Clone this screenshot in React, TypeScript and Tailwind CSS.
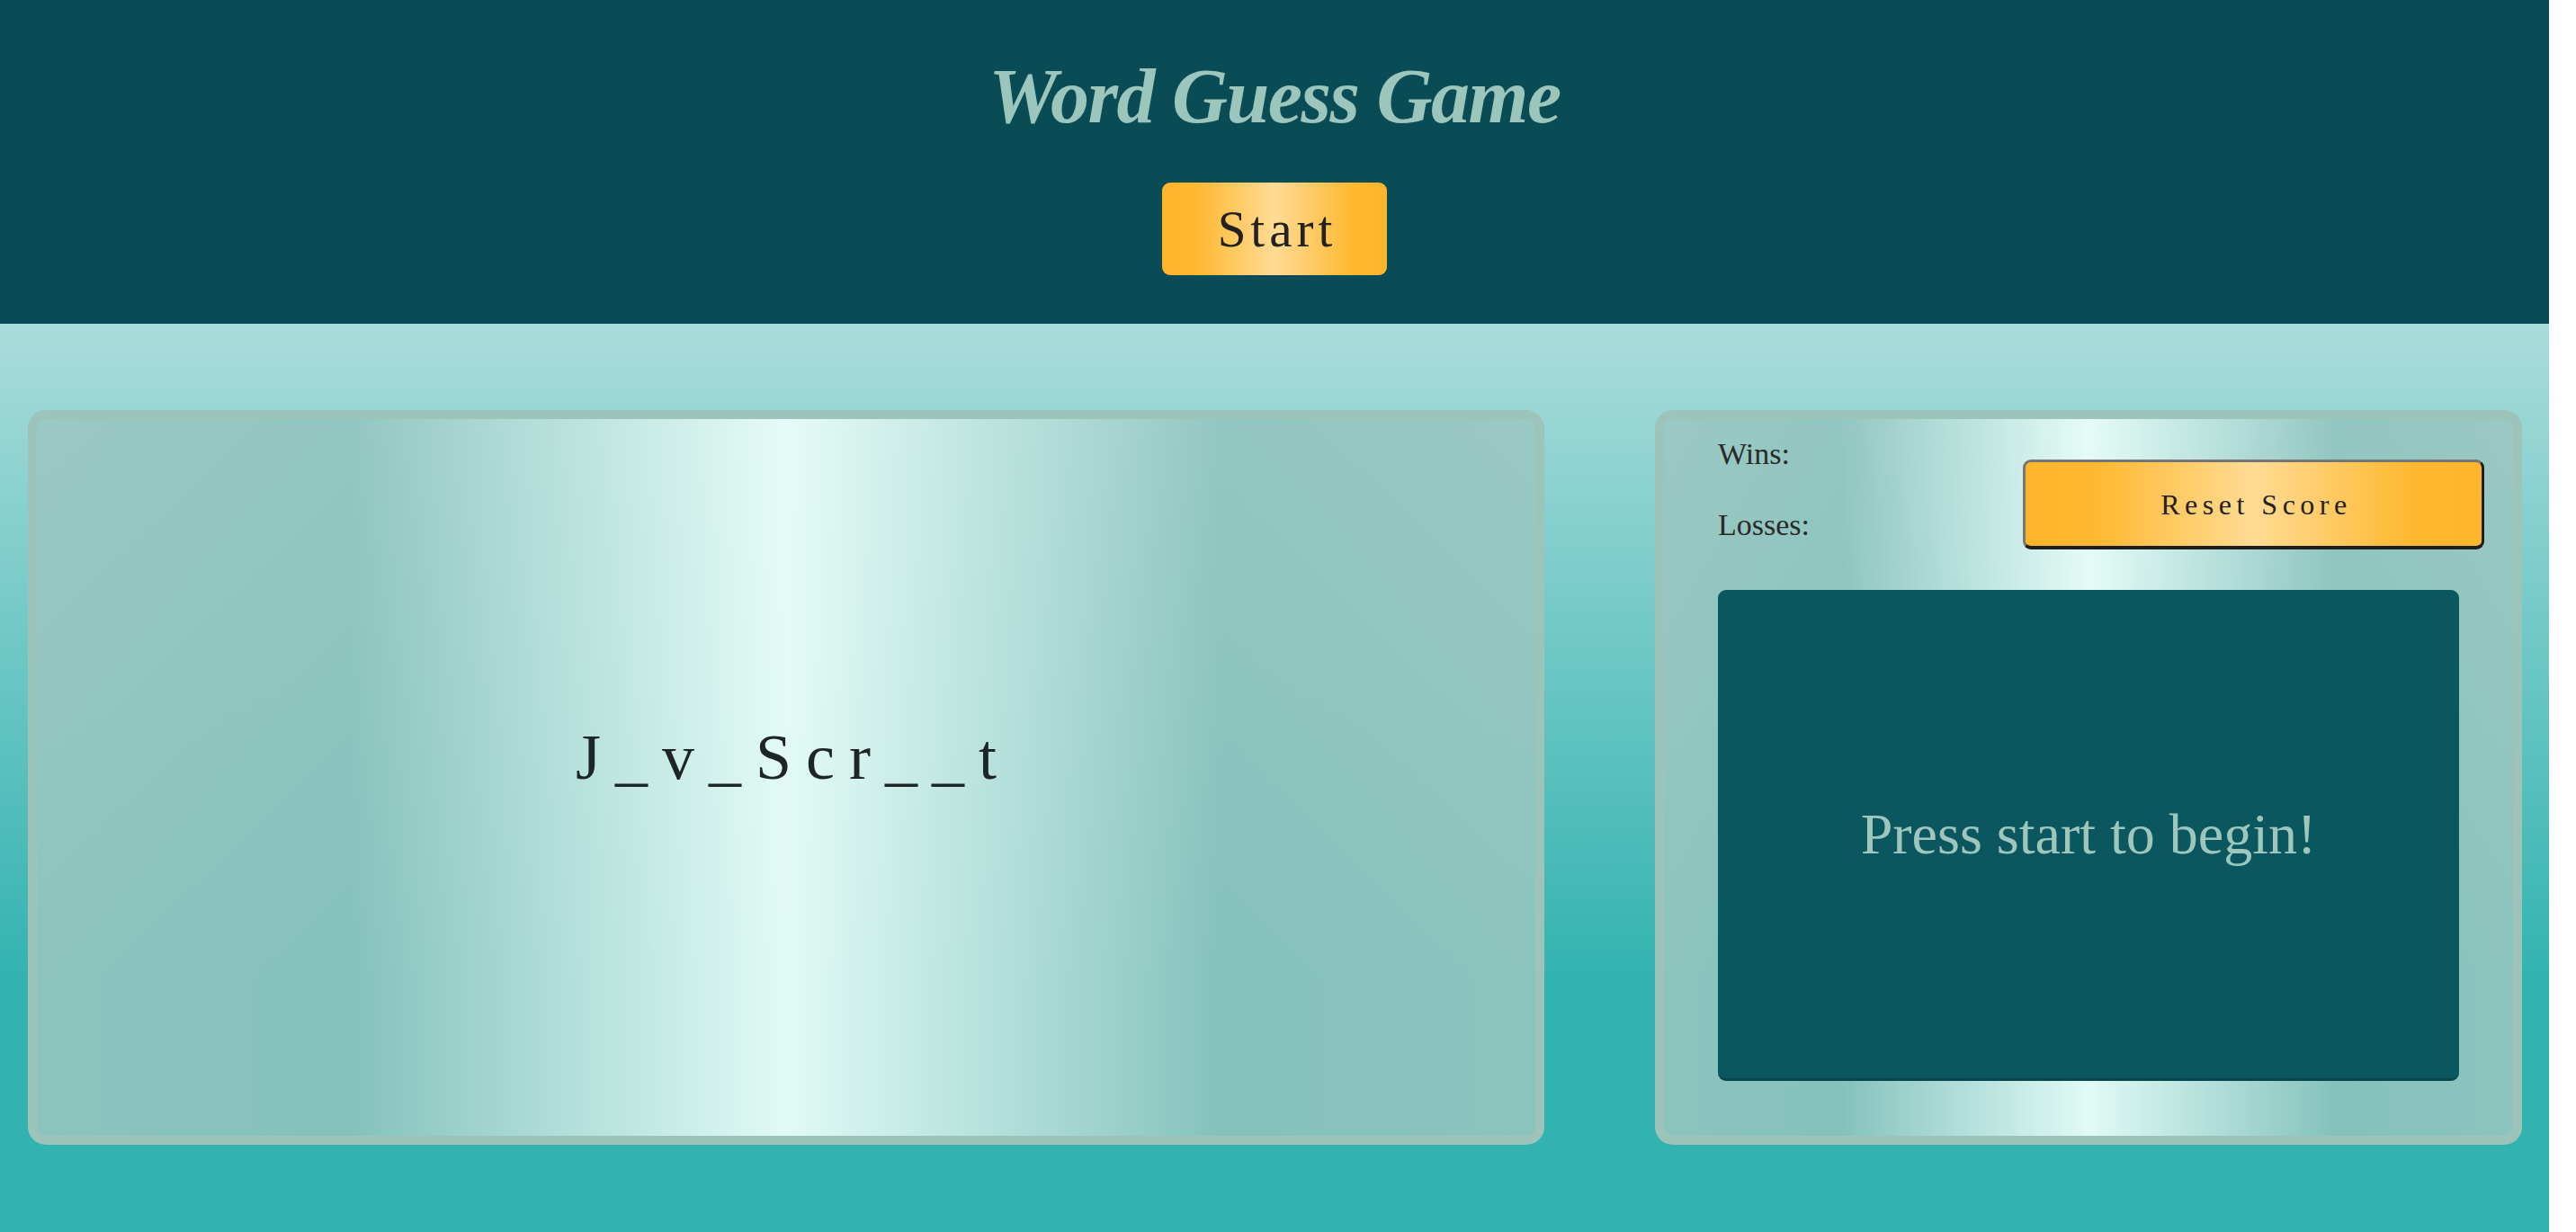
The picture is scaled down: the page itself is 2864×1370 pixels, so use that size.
const serif = "font-['Liberation_Serif','Times_New_Roman',serif]";

// 面板共通の金属調グラデーション
const panel =
  "rounded-[20px] border-[10px] border-[#9cc4bb] bg-[linear-gradient(to_right,rgba(155,198,192,0.86)_0%,rgba(146,196,189,0.86)_21%,rgba(180,220,215,0.9)_32%,rgba(232,253,248,0.96)_50%,rgba(180,220,215,0.9)_68%,rgba(146,196,189,0.86)_79%,rgba(155,198,192,0.86)_100%)]";

const gold =
  "bg-[linear-gradient(to_right,#ffb52a_0%,#ffb830_15%,#ffdb94_50%,#ffb830_85%,#ffb52a_100%)]";

function Header() {
  return (
    <header className="flex h-[360px] flex-col items-center bg-[#0a4c55] pt-[64px]">
      <h1
        className={`${serif} text-[86px] leading-none font-bold italic tracking-[-1.5px] text-[#9cc5bb]`}
      >
        Word Guess Game
      </h1>
      <button
        type="button"
        className={`${serif} ${gold} mt-[53px] flex h-[103px] w-[250px] items-center justify-center rounded-[9px] pl-[6px] text-[57px] tracking-[5px] text-[#222]`}
      >
        Start
      </button>
    </header>
  );
}

function WordPanel() {
  return (
    <section
      className={`${panel} flex h-[817px] w-[1686px] items-center justify-center pb-[46px]`}
    >
      <p
        className={`${serif} pl-[16px] text-[72px] leading-none tracking-[16px] text-[#1e2526]`}
      >
        J_v_Scr__t
      </p>
    </section>
  );
}

function ScorePanel() {
  return (
    <section className={`${panel} flex h-[817px] w-[964px] flex-col`}>
      <div className="flex h-[190px] items-start justify-between pr-[32px] pl-[60px]">
        <div
          className={`${serif} flex flex-col gap-[39px] pt-[19px] text-[34px] leading-[40px] text-[#2a2a2a]`}
        >
          <span>Wins:</span>
          <span>Losses:</span>
        </div>
        <button
          type="button"
          className={`${serif} ${gold} mt-[45px] flex h-[100px] w-[513px] items-center justify-center rounded-[9px] border-[3px] border-t-[#767676] border-r-[#1e1e1e] border-b-[4px] border-b-[#1e1e1e] border-l-[#767676] pl-[6px] text-[32px] tracking-[5.5px] text-[#222]`}
        >
          Reset Score
        </button>
      </div>
      <div className="mx-[60px] flex h-[546px] items-center justify-center rounded-[9px] border-b-[3px] border-[#07464d] bg-[#0a5760]">
        <p className={`${serif} text-[64px] leading-none text-[#9ec6bd]`}>
          Press start to begin!
        </p>
      </div>
    </section>
  );
}

export default function App() {
  return (
    <div className="w-[2834px]">
      <Header />
      <main className="flex gap-[123px] bg-[linear-gradient(to_bottom,#a9dcdb_0%,#33b3b0_72%,#33b3b0_100%)] pt-[96px] pb-[97px] pl-[31px]">
        <WordPanel />
        <ScorePanel />
      </main>
    </div>
  );
}
